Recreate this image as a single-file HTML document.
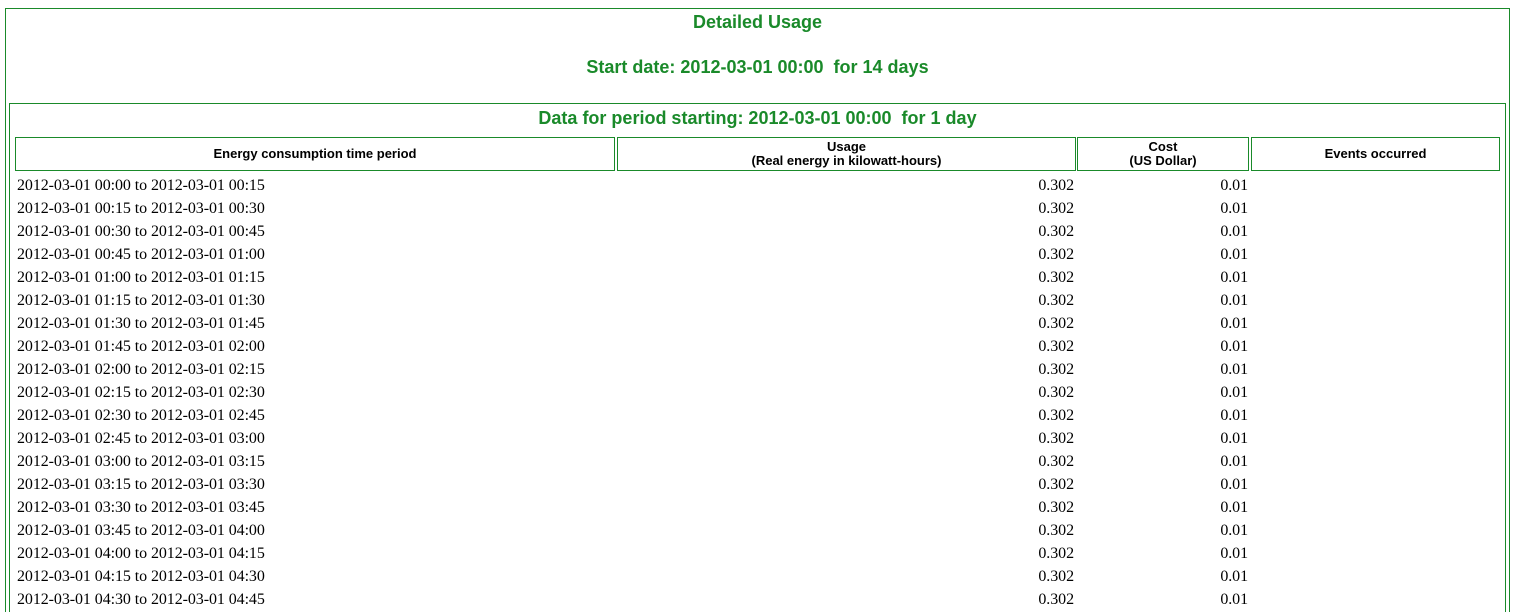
<!DOCTYPE html>
<html style="overflow:hidden;height:612px"><head><style>
body{margin:0;background:#fff;width:1515px;height:612px;overflow:hidden;position:relative;font-family:"Liberation Serif",serif}
.b{position:absolute;border:1px solid #1a8a2a;box-sizing:border-box}
.h{position:absolute;left:0;width:1515px;text-align:center;color:#1a8a2a;font:bold 18px "Liberation Sans",sans-serif}
.th{position:absolute;border:1px solid #1a8a2a;box-sizing:border-box;height:34px;top:137px;display:flex;align-items:center;justify-content:center;text-align:center;font:bold 13px/14px "Liberation Sans",sans-serif;color:#000}
.r{position:absolute;font-size:16px;line-height:23px;height:23px;color:#000;letter-spacing:-0.08px}
</style></head><body>
<div class="b" style="left:5px;top:8px;width:1505px;height:700px"></div>
<div class="b" style="left:9px;top:103px;width:1497px;height:600px"></div>
<div class="h" style="top:12px">Detailed Usage</div>
<div class="h" style="top:57px">Start date: 2012-03-01 00:00&nbsp; for 14 days</div>
<div class="h" style="top:108px">Data for period starting: 2012-03-01 00:00&nbsp; for 1 day</div>
<div class="th" style="left:15px;width:600px">Energy consumption time period</div>
<div class="th" style="left:617px;width:459px">Usage<br>(Real energy in kilowatt-hours)</div>
<div class="th" style="left:1077px;width:172px">Cost<br>(US Dollar)</div>
<div class="th" style="left:1251px;width:249px">Events occurred</div>
<div id="rows"></div>
<script>
var h='';
function f(m){var hh=Math.floor(m/60),mm=m%60;return (hh<10?'0':'')+hh+':'+(mm<10?'0':'')+mm}
for(var i=0;i<20;i++){var y=174+23*i;
h+='<div class="r" style="left:17px;top:'+y+'px">2012-03-01 '+f(i*15)+' to 2012-03-01 '+f(i*15+15)+'</div>';
h+='<div class="r" style="right:441px;top:'+y+'px">0.302</div>';
h+='<div class="r" style="right:267px;top:'+y+'px">0.01</div>';}
document.getElementById('rows').innerHTML=h;
</script>
</body></html>
